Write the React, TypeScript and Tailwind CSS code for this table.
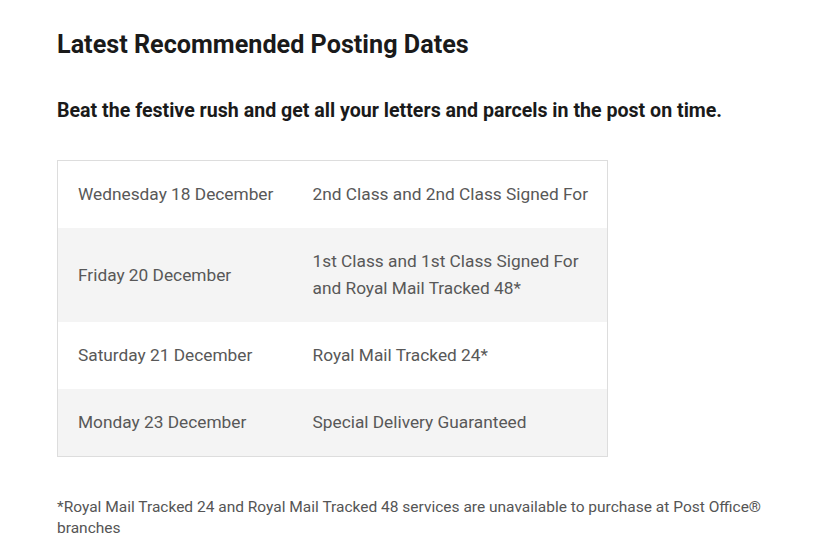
const rows = [
  { date: "Wednesday 18 December", service: ["2nd Class and 2nd Class Signed For"] },
  { date: "Friday 20 December", service: ["1st Class and 1st Class Signed For", "and Royal Mail Tracked 48*"] },
  { date: "Saturday 21 December", service: ["Royal Mail Tracked 24*"] },
  { date: "Monday 23 December", service: ["Special Delivery Guaranteed"] },
];

export default function App() {
  return (
    <div className="min-h-[559px] bg-white pl-[57px] pt-[30px] font-['Roboto',sans-serif]">
      <h1 className="text-[25.2px] font-bold leading-[30px] text-[#1a1a1a]">Latest Recommended Posting Dates</h1>
      <p className="mt-[39px] text-[19.6px] font-bold leading-[24px] text-[#1a1a1a]">
        Beat the festive rush and get all your letters and parcels in the post on time.
      </p>
      <table className="mt-[37px] w-[551px] table-fixed border border-[#dddddd] text-[17.3px] text-[#585858]">
        <tbody>
          {rows.map((row, i) => (
            <tr key={row.date} className={i % 2 === 1 ? "bg-[#f4f4f4]" : "bg-white"}>
              <td className="w-[255px] py-[20px] pl-[20px] align-middle leading-[27px]">{row.date}</td>
              <td className="py-[20px] pr-[10px] align-middle leading-[27px]">
                {row.service.map((line) => (
                  <div key={line}>{line}</div>
                ))}
              </td>
            </tr>
          ))}
        </tbody>
      </table>
      <p className="mt-[40px] w-[720px] text-[15.5px] leading-[21px] text-[#555555]">
        *Royal Mail Tracked 24 and Royal Mail Tracked 48 services are unavailable to purchase at Post Office® branches
      </p>
    </div>
  );
}
